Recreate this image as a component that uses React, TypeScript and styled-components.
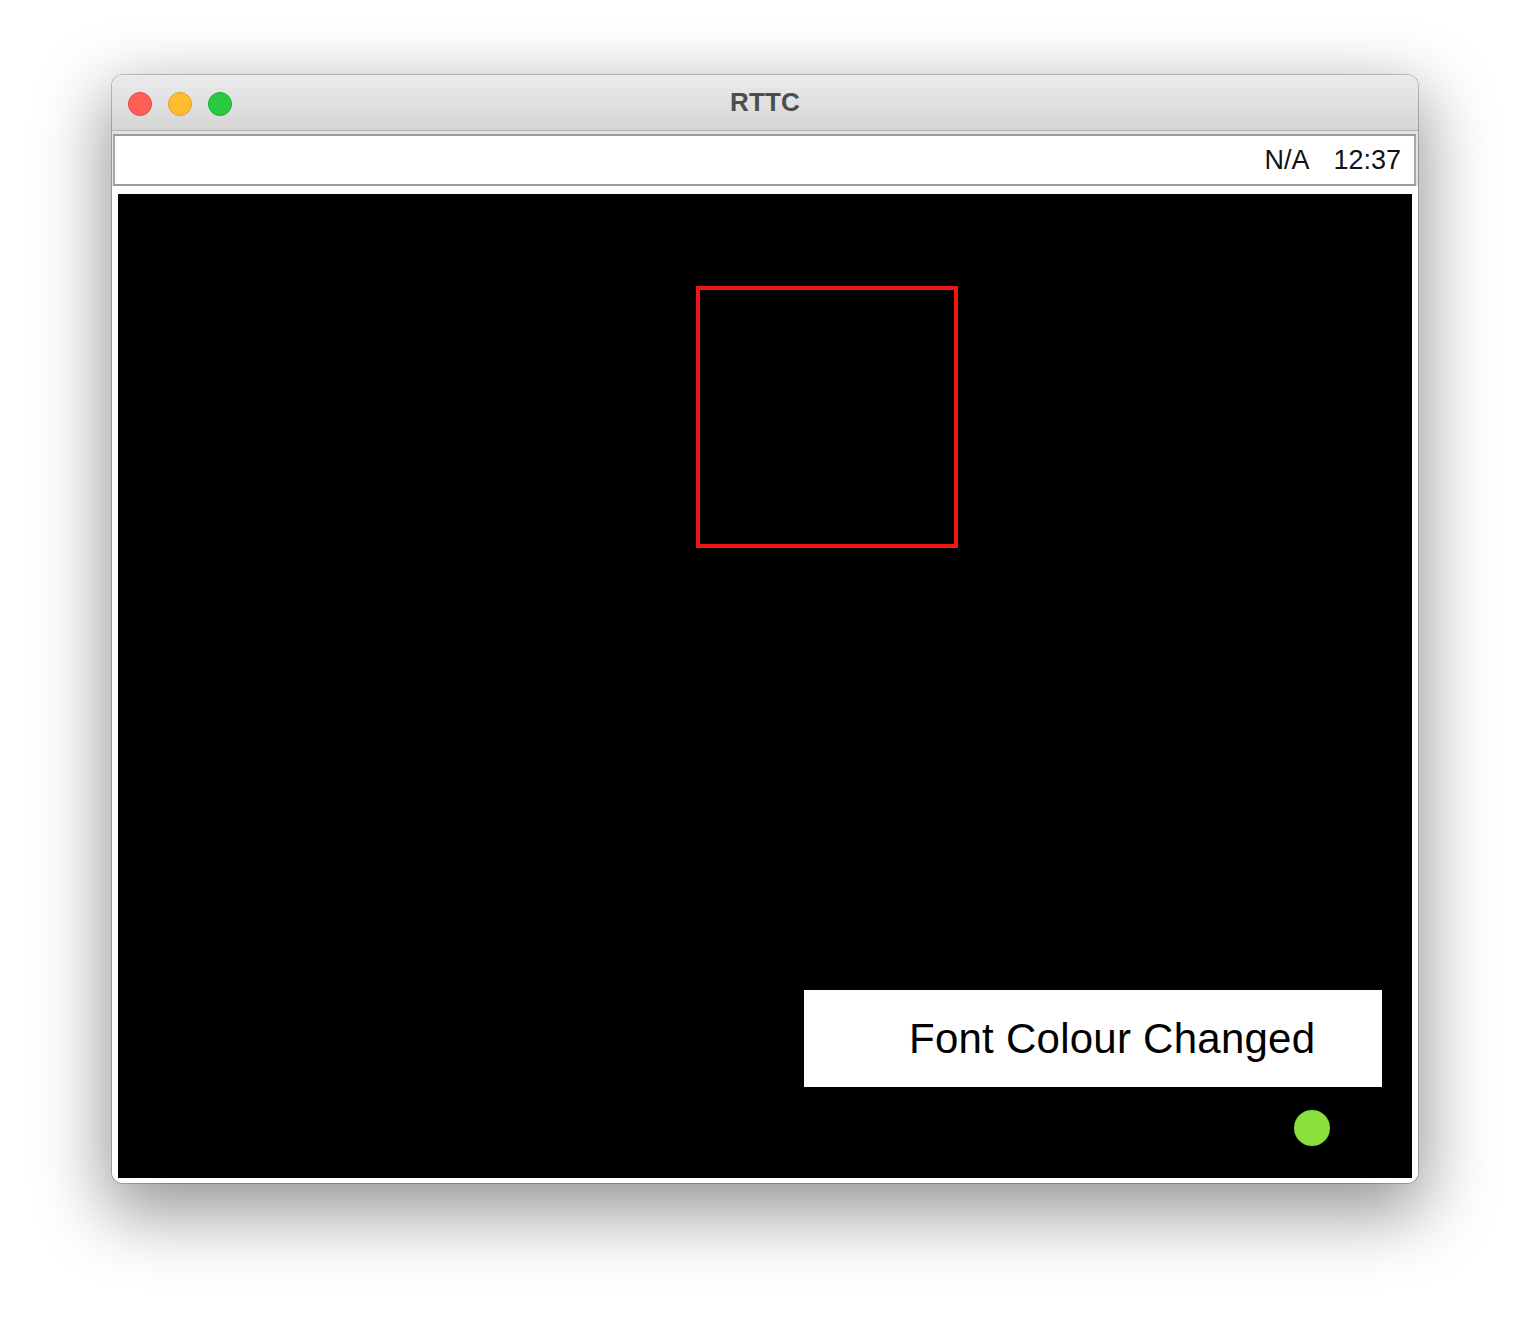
import React from "react";
import styled, { createGlobalStyle } from "styled-components";

const GlobalStyle = createGlobalStyle`
  html, body {
    margin: 0;
    padding: 0;
    background: #ffffff;
  }
  body {
    font-family: "Liberation Sans", Arial, sans-serif;
    width: 1530px;
    height: 1332px;
    overflow: hidden;
  }
`;

const Stage = styled.div`
  display: flex;
  justify-content: center;
  padding-top: 75px;
`;

const Window = styled.div`
  width: 1306px;
  display: flex;
  flex-direction: column;
  background: #ffffff;
  border-radius: 11px;
  overflow: hidden;
  box-shadow: 0 0 0 1px rgba(0, 0, 0, 0.22), 0 24px 70px 6px rgba(0, 0, 0, 0.42);
`;

const TitleBar = styled.div`
  height: 55px;
  position: relative;
  display: flex;
  align-items: center;
  justify-content: center;
  background: linear-gradient(#ebebeb, #d5d5d5);
  border-bottom: 1px solid #b3b3b3;
`;

const Lights = styled.div`
  position: absolute;
  left: 16px;
  top: 17px;
  display: flex;
  gap: 16px;
`;

const Light = styled.span<{ $fill: string; $edge: string }>`
  width: 22px;
  height: 22px;
  border-radius: 50%;
  background: ${(p) => p.$fill};
  border: 1px solid ${(p) => p.$edge};
`;

const Title = styled.div`
  font-family: "Liberation Sans", Arial, sans-serif;
  font-weight: 700;
  font-size: 26px;
  color: #4d4d4d;
  letter-spacing: 0.2px;
`;

const ToolbarWell = styled.div`
  background: #e3e3e3;
  padding: 3px 2px 0 1px;
`;

const Toolbar = styled.div`
  height: 48px;
  background: #ffffff;
  border: 2px solid #a8a8a8;
  border-top-color: #9b9b9b;
  border-bottom-color: #9c9c9c;
  display: flex;
  align-items: center;
  justify-content: flex-end;
  gap: 24px;
  padding-right: 13px;
`;

const Status = styled.span`
  font-family: "Liberation Sans", Arial, sans-serif;
  font-size: 27px;
  color: #111111;
`;

const Body = styled.div`
  padding: 8px 6px 5px 6px;
  background: #ffffff;
`;

const Canvas = styled.div`
  position: relative;
  height: 984px;
  background: #000000;
`;

const Square = styled.div`
  position: absolute;
  left: 578px;
  top: 92px;
  width: 262px;
  height: 262px;
  box-sizing: border-box;
  border: 4px solid #f01616;
`;

const Label = styled.div`
  position: absolute;
  left: 686px;
  top: 796px;
  width: 578px;
  height: 97px;
  background: #ffffff;
  display: flex;
  align-items: center;
  padding-left: 105px;
  box-sizing: border-box;
  font-family: "Liberation Sans", Arial, sans-serif;
  font-size: 42px;
  letter-spacing: 0.25px;
  color: #000000;
  white-space: nowrap;
`;

const Dot = styled.div`
  position: absolute;
  left: 1176px;
  top: 916px;
  width: 36px;
  height: 36px;
  border-radius: 50%;
  background: #8ae03a;
`;

export default function App() {
  return (
    <>
      <GlobalStyle />
      <Stage>
        <Window>
          <TitleBar>
            <Lights>
              <Light $fill="#fe5f57" $edge="#e2463f" />
              <Light $fill="#febc2e" $edge="#e0a226" />
              <Light $fill="#28c840" $edge="#1eac2f" />
            </Lights>
            <Title>RTTC</Title>
          </TitleBar>
          <ToolbarWell>
            <Toolbar>
              <Status>N/A</Status>
              <Status>12:37</Status>
            </Toolbar>
          </ToolbarWell>
          <Body>
            <Canvas>
              <Square />
              <Label>Font Colour Changed</Label>
              <Dot />
            </Canvas>
          </Body>
        </Window>
      </Stage>
    </>
  );
}
